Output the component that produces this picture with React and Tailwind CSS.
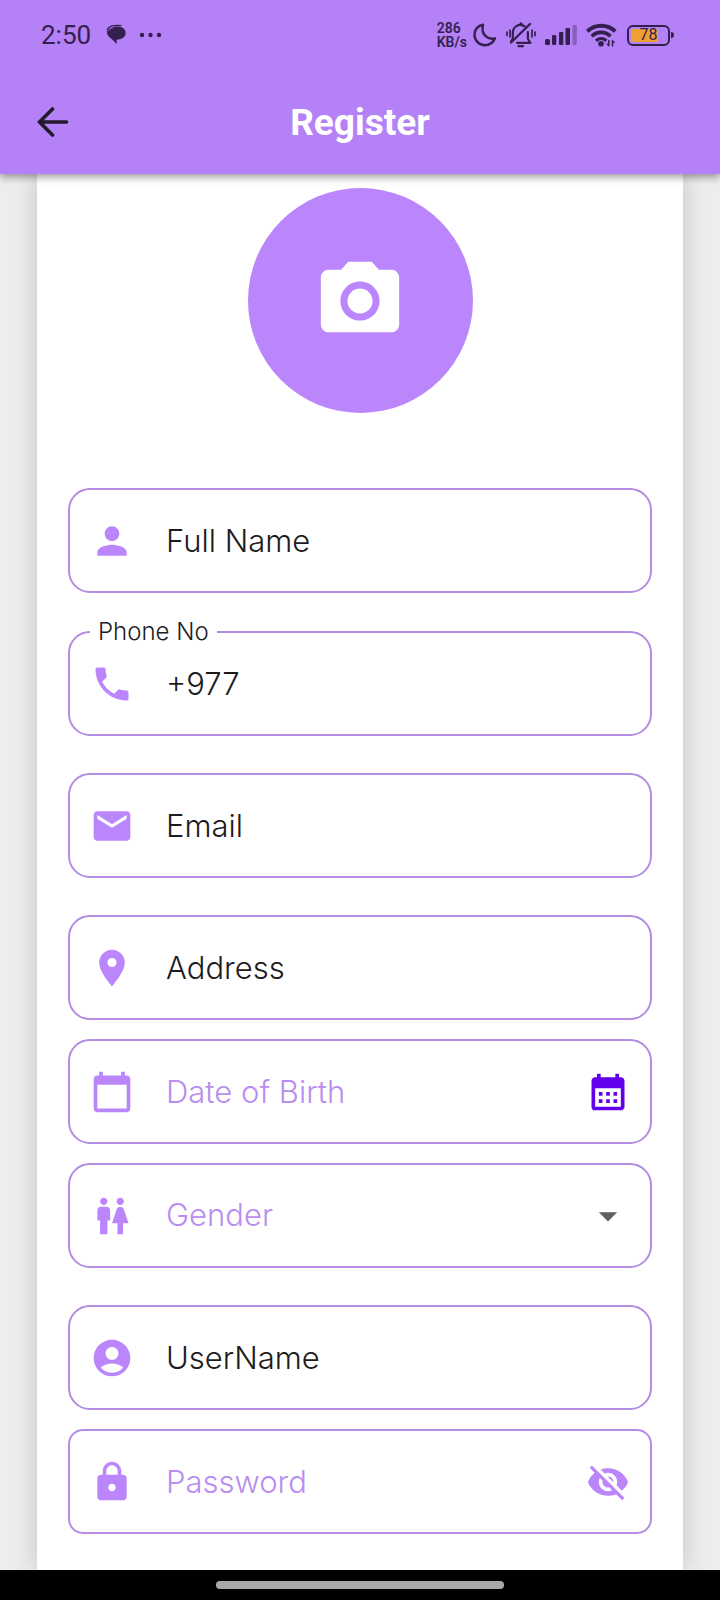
import { useState } from "react";
import {
  MdAccountCircle,
  MdArrowDropDown,
  MdCalendarMonth,
  MdCalendarToday,
  MdCameraAlt,
  MdEmail,
  MdLocationOn,
  MdLock,
  MdPerson,
  MdPhone,
  MdVisibilityOff,
  MdWc,
} from "react-icons/md";

const INK = "#33204f";

function ChatIcon() {
  return (
    <svg width="22" height="22" viewBox="0 0 22 22" aria-hidden="true">
      <path
        d="M9 2.900C14.500 1.800 20.600 3.600 20.600 9c0 4-3.400 6.300-9 6.800v4.400C9.500 18 8 16.200 6 14.600 3 12.200 1.600 9.500 1.800 7.400 2.200 5 4.700 3.700 9 2.900z"
        fill={INK}
      />
      <path d="M2.200 5.500C4 2.200 9 .9 16 1.700" fill="none" stroke={INK} strokeWidth="1.300" strokeLinecap="round" />
      <path d="M3.200 7.400c.6-2.300 2.600-3.300 5-3.800" fill="none" stroke="#b481f6" strokeWidth=".6" />
    </svg>
  );
}

function MoonIcon() {
  return (
    <svg width="24" height="24" viewBox="0 0 24 24" aria-hidden="true">
      <path
        d="M10 1.700C4.900 2.500 1.500 6.700 1.500 11.700c0 5.800 4.500 10.500 10.300 10.500 4.700 0 8.600-2.800 10.200-6.900-6.400 1.800-14.500-3-12-13.600z"
        fill="none"
        stroke={INK}
        strokeWidth="2.400"
        strokeLinejoin="round"
      />
    </svg>
  );
}

function BellOffIcon() {
  return (
    <svg width="30" height="26" viewBox="0 0 30 26" aria-hidden="true" fill="none" stroke={INK} strokeLinecap="round">
      <path d="M18.500 4.300C12.500.8 6.800 5 6.800 11v5.500L5 19.500" strokeWidth="2.200" />
      <path d="M11 20.800h13.500l-2.600-3.800v-7" strokeWidth="2.200" strokeLinejoin="round" />
      <path d="M15 2v-.3" strokeWidth="3" />
      <path d="M24 2L5 20.500" strokeWidth="2.400" />
      <path d="M12.500 24.200h4.500" strokeWidth="2.200" />
      <path d="M4 8v7M26 8v7M1 10v3.500M29 10v3.500" strokeWidth="1.700" />
    </svg>
  );
}

function SignalIcon() {
  return (
    <svg width="32" height="22" viewBox="0 0 32 22" aria-hidden="true" fill={INK}>
      <rect x="0" y="15" width="5" height="6" rx="1.500" />
      <rect x="7" y="11" width="4.300" height="10" rx="1.200" />
      <rect x="14" y="8" width="4.300" height="13" rx="1.200" />
      <rect x="20.500" y="4" width="4.500" height="17" rx="1.200" />
      <rect x="27.500" y="1" width="4.300" height="20" rx="1.200" opacity=".35" />
    </svg>
  );
}

function WifiIcon() {
  return (
    <svg width="31" height="25" viewBox="0 0 31 25" aria-hidden="true" fill="none" stroke={INK}>
      <path d="M1.300 8.400C9 .9 21.500.9 29.200 8.400" strokeWidth="4" />
      <path d="M5.700 13.300c5.300-5.200 13.500-5.200 18.800 0" strokeWidth="3.600" />
      <path d="M10 17.700c3-2.700 7.400-2.700 10.400 0" strokeWidth="3.200" />
      <circle cx="15" cy="20.800" r="2.800" fill={INK} stroke="none" />
      <path d="M22.800 17v6M26.500 23.500v-6" strokeWidth="1.500" />
      <path d="M20.200 20.500l2.600 3.500v-3.500zM29.100 20l-2.600-3.500V20z" fill={INK} stroke="none" />
    </svg>
  );
}

function StatusBar() {
  return (
    <div className="flex h-[70px] items-center justify-between pr-[46px] pl-[41px] text-[#33204f]">
      <div className="flex items-center">
        <span className="text-[26px] leading-8">2:50</span>
        <span className="ml-[14px]">
          <ChatIcon />
        </span>
        <svg className="ml-3" width="24" height="6" viewBox="0 0 24 6" aria-hidden="true" fill={INK}>
          <circle cx="3" cy="3" r="2.200" />
          <circle cx="11.500" cy="3" r="2.200" />
          <circle cx="20" cy="3" r="2.200" />
        </svg>
      </div>
      <div className="flex items-center gap-[10px]">
        <span className="text-[14px] leading-[14px] font-semibold">
          286
          <br />
          KB/s
        </span>
        <div className="-ml-1 flex items-center gap-[9px]">
          <MoonIcon />
          <BellOffIcon />
          <SignalIcon />
          <WifiIcon />
        </div>
        <div className="flex items-center gap-px">
          <div className="flex h-[21px] w-[43px] rounded-md border-2 border-[#33204f] p-[2px]">
            <div className="relative h-full w-full">
              <div className="h-full w-[78%] rounded-l-xs bg-[#f0a030]" />
              <span className="absolute inset-0 flex items-center justify-center text-[16px] leading-4">78</span>
            </div>
          </div>
          <div className="h-[6px] w-[3px] rounded-r-sm bg-[#33204f]" />
        </div>
      </div>
    </div>
  );
}

function AppBar() {
  return (
    <div className="grid h-[104px] grid-cols-[1fr_auto_1fr] items-center px-[31px]">
      <button type="button" aria-label="Back" className="flex size-[44px] items-center justify-center justify-self-start">
        <svg width="32" height="32" viewBox="0 0 32 32" aria-hidden="true">
          <path
            d="M29.500 16H2.500M15.500 3L2.500 16l13 13"
            fill="none"
            stroke="#211a2b"
            strokeWidth="3.600"
            strokeLinecap="round"
          />
        </svg>
      </button>
      <h1 className="pt-[2px] text-[37px] leading-[44px] font-bold text-white">Register</h1>
    </div>
  );
}

function Field({ icon: Icon, radius = "rounded-[22px]", gap = "mt-[37px]", children }) {
  return (
    <div
      className={`relative flex h-[105px] items-center border-2 border-[#b48ce2] px-5 focus-within:border-[#7c3aed] ${radius} ${gap}`}
    >
      <Icon className="size-[44px] shrink-0 text-[#bb86fc]" aria-hidden="true" />
      {children}
    </div>
  );
}

const INPUT =
  "h-full min-w-0 flex-1 bg-transparent pl-8 text-[31px] font-light outline-none";
const DARK = "text-[#1c1c1e] placeholder:text-[#1c1c1e] placeholder:opacity-100";
const LILAC = "text-[#b98df0] placeholder:text-[#b98df0] placeholder:opacity-100";

export default function App() {
  const [phone, setPhone] = useState("+977");
  const [gender, setGender] = useState("");
  const [visible, setVisible] = useState(false);

  return (
    <div className="flex min-h-screen flex-col bg-[#ededed] font-['Roboto',sans-serif]">
      <header className="relative z-10 bg-[#b481f6] shadow-[0_3px_8px_rgba(0,0,0,0.4)]">
        <StatusBar />
        <AppBar />
      </header>

      <main className="flex flex-1 flex-col overflow-hidden px-[37px]">
        <form
          className="flex-1 bg-white px-[31px] pt-[14px] pb-[35px] font-['Inter',sans-serif] shadow-[0_0_24px_rgba(0,0,0,0.18)]"
          onSubmit={(e) => e.preventDefault()}
        >
          <button
            type="button"
            aria-label="Add photo"
            className="mx-auto mb-[75px] flex size-[225px] items-center justify-center rounded-full bg-[#bb86fc]"
          >
            <MdCameraAlt className="size-[94px] text-white" aria-hidden="true" />
          </button>

          <Field icon={MdPerson} gap="mt-0">
            <input className={`${INPUT} ${DARK}`} type="text" aria-label="Full Name" placeholder="Full Name" />
          </Field>

          <Field icon={MdPhone} gap="mt-[38px]">
            <label
              htmlFor="phone"
              className="absolute -top-[15px] left-5 bg-white px-2 text-[24px] leading-7 font-light text-[#1c1c1e]"
            >
              Phone No
            </label>
            <input
              id="phone"
              className={`${INPUT} ${DARK}`}
              type="tel"
              value={phone}
              onChange={(e) => setPhone(e.target.value)}
            />
          </Field>

          <Field icon={MdEmail}>
            <input className={`${INPUT} ${DARK}`} type="email" aria-label="Email" placeholder="Email" />
          </Field>

          <Field icon={MdLocationOn}>
            <input className={`${INPUT} ${DARK}`} type="text" aria-label="Address" placeholder="Address" />
          </Field>

          <Field icon={MdCalendarToday} gap="mt-[19px]">
            <input
              className={`${INPUT} ${LILAC}`}
              type="text"
              aria-label="Date of Birth"
              placeholder="Date of Birth"
            />
            <button type="button" aria-label="Pick a date">
              <MdCalendarMonth className="size-[44px] text-[#6200ee]" aria-hidden="true" />
            </button>
          </Field>

          <Field icon={MdWc} gap="mt-[19px]">
            <select
              className={`${INPUT} ${LILAC} appearance-none`}
              aria-label="Gender"
              value={gender}
              onChange={(e) => setGender(e.target.value)}
            >
              <option value="" disabled hidden>
                Gender
              </option>
              <option value="male">Male</option>
              <option value="female">Female</option>
              <option value="other">Other</option>
            </select>
            <MdArrowDropDown className="pointer-events-none size-[44px] text-[#616161]" aria-hidden="true" />
          </Field>

          <Field icon={MdAccountCircle}>
            <input className={`${INPUT} ${DARK}`} type="text" aria-label="UserName" placeholder="UserName" />
          </Field>

          <Field icon={MdLock} radius="rounded-[15px]" gap="mt-[19px]">
            <input
              className={`${INPUT} ${LILAC}`}
              type={visible ? "text" : "password"}
              aria-label="Password"
              placeholder="Password"
            />
            <button type="button" aria-label="Toggle password visibility" onClick={() => setVisible(!visible)}>
              <MdVisibilityOff className="size-[44px] text-[#bb86fc]" aria-hidden="true" />
            </button>
          </Field>
        </form>
      </main>

      <footer className="relative z-10 flex h-[30px] items-center justify-center bg-black">
        <div className="h-2 w-2/5 rounded-full bg-[#a9a9a9]" />
      </footer>
    </div>
  );
}
